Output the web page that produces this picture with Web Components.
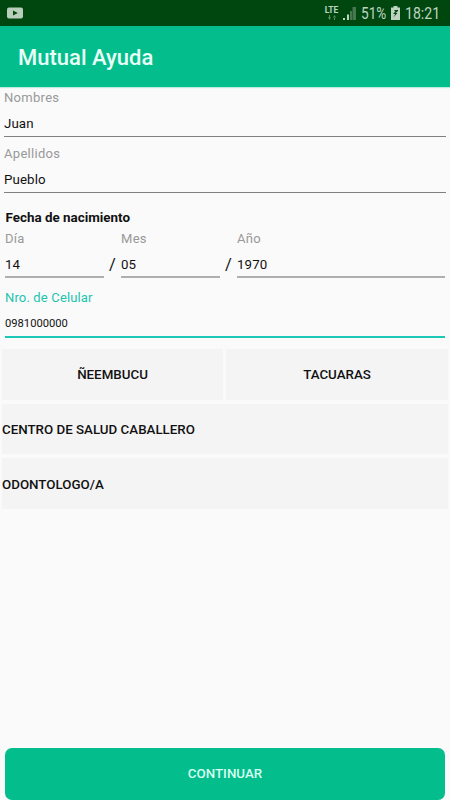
<!DOCTYPE html>
<html lang="es">
<head>
<meta charset="utf-8">
<title>Mutual Ayuda</title>
<style>
html,body{margin:0;height:100%;background:#fafafa}
body{font-family:Roboto,"Liberation Sans",sans-serif;color:#111}
</style>
</head>
<body>
<mutual-app></mutual-app>
<script>
const define = (name, html) => {
  const t = document.createElement('template');
  t.innerHTML = html;
  customElements.define(name, class extends HTMLElement {
    constructor() {
      super();
      this.attachShadow({mode: 'open'}).append(t.content.cloneNode(true));
    }
  });
};

define('status-bar', `
<style>
:host{display:flex;align-items:center;height:26px;box-sizing:border-box;background:#00470f;color:#bfd3c2;padding:0 10px 0 7px;font-size:16px}
svg{display:block;flex:none}
.gap{flex:1}
.lte{width:15px;margin-right:4px;text-align:center;font-size:8.5px;font-weight:700;line-height:8px}
.lte svg{margin:1px auto 0}
.pct{width:26px;margin-left:5px;white-space:nowrap}
.clock{width:35px;white-space:nowrap}
.pct span,.clock span{display:inline-block;transform-origin:0 50%;line-height:26px;padding-top:1px}
.pct span{transform:scaleX(.85)}
.clock span{transform:scaleX(.88)}
.bat{margin:0 5px 0 4px}
</style>
<svg width="16" height="12" viewBox="0 0 16 12"><rect y=".5" width="16" height="11" rx="2" fill="#b9cfbc"/><path d="M6 3.6v4.8L10.8 6z" fill="#00470f"/></svg>
<span class="gap"></span>
<div class="lte">LTE<svg width="8" height="5" viewBox="0 0 8 5" fill="#5f8d67"><path d="M0 2.2h3L1.5 5zM1 0h1v3H1zM5 2.8h3L6.500 0zM6 2h1v3H6z"/></svg></div>
<svg width="13" height="13" viewBox="0 0 13 13"><path d="M0 11h2v2H0zM4 7.500h2V13h-2z" fill="#bfd3c2"/><path d="M7 4h2v9H7zM9.500 0H13v13H9.500z" fill="#48764f"/></svg>
<div class="pct"><span>51%</span></div>
<svg class="bat" width="9" height="14" viewBox="0 0 9 14"><path d="M2.500 0h4v1.500H9V14H0V1.500h2.500z" fill="#bfd3c2"/><path d="M7 4H3.500v1.300h1.200L2 8h2.300L2.300 11.500 6.500 7H4.600L7 5z" fill="#00470f"/></svg>
<div class="clock"><span>18:21</span></div>`);

define('app-bar', `
<style>
:host{display:flex;align-items:center;height:61px;box-sizing:border-box;background:#03be8c;color:#e9fff8;padding:2px 0 0 18px;font-size:22px;font-weight:500;box-shadow:0 1px 1px #03be8c40}
</style><slot></slot>`);

define('text-field', `
<style>
:host{display:grid;grid-template-rows:20px 1fr;box-sizing:border-box;height:50px;border-bottom:2px solid #afafaf;white-space:nowrap;--label:#999}
.label{color:var(--label);font-size:13px;line-height:22px;letter-spacing:var(--ls,.3px)}
.value{font-size:13.300px;line-height:34px;color:#111;letter-spacing:.1px}
:host([name-field]) .value{line-height:34px}
:host([name-field]){height:50px;border-bottom-width:1px;border-color:#808080}
:host([active]){--label:#22c4ae;height:51px;border-color:#1cc9b6;--ls:.15px}
:host([active]) .value{font-size:11.200px;line-height:34px;letter-spacing:0}
</style>
<div class="label"><slot name="label"></slot></div>
<div class="value"><slot></slot></div>`);

define('date-row', `
<style>
:host{display:grid;grid-template-columns:99px 17px 99px 17px 208px;height:51px}
.sep{font-size:16.500px;line-height:20px;padding-top:27px;text-align:center}
</style>
<slot name="day"></slot><span class="sep">/</span><slot name="month"></slot><span class="sep">/</span><slot name="year"></slot>`);

define('pick-button', `
<style>
:host{display:flex;align-items:center;justify-content:center;box-sizing:border-box;height:51px;background:#f4f4f4;font-size:13.330px;font-weight:500;white-space:nowrap}
:host([start]){justify-content:flex-start;padding-top:1px}
</style><slot></slot>`);

define('primary-button', `
<style>
:host{display:flex;align-items:center;justify-content:center;height:52.500px;background:#03be8c;border-radius:7px;color:#d8fff1;font-size:13.330px;font-weight:500}
</style><slot></slot>`);

define('mutual-app', `
<style>
:host{display:flex;flex-direction:column;width:450px;height:800px;overflow:hidden;background:#fafafa}
.names{display:grid;gap:6px;padding:0 4px}
.birth{margin:16px 5px 0;font-size:13.400px;font-weight:700;line-height:17px;height:16px;padding-left:.5px}
date-row{margin:3px 5px 0}
.phone{margin:8px 5px 0}
.choices{display:grid;grid-template-columns:221px 222px;gap:4px 3px;margin:11px 2px 0}
.wide{grid-column:1/-1}
.mid{height:50px}
.gap{flex:1}
primary-button{margin:0 5px;flex:none}
</style>
<status-bar></status-bar>
<app-bar>Mutual Ayuda</app-bar>
<div class="names">
<text-field name-field><span slot="label">Nombres</span>Juan</text-field>
<text-field name-field><span slot="label">Apellidos</span>Pueblo</text-field>
</div>
<div class="birth">Fecha de nacimiento</div>
<date-row>
<text-field slot="day"><span slot="label">Día</span>14</text-field>
<text-field slot="month"><span slot="label">Mes</span>05</text-field>
<text-field slot="year"><span slot="label">Año</span>1970</text-field>
</date-row>
<text-field class="phone" active><span slot="label">Nro. de Celular</span>0981000000</text-field>
<div class="choices">
<pick-button>ÑEEMBUCU</pick-button><pick-button>TACUARAS</pick-button>
<pick-button start class="wide mid">CENTRO DE SALUD CABALLERO</pick-button>
<pick-button start class="wide">ODONTOLOGO/A</pick-button>
</div>
<span class="gap"></span>
<primary-button>CONTINUAR</primary-button>`);
</script>
</body>
</html>
